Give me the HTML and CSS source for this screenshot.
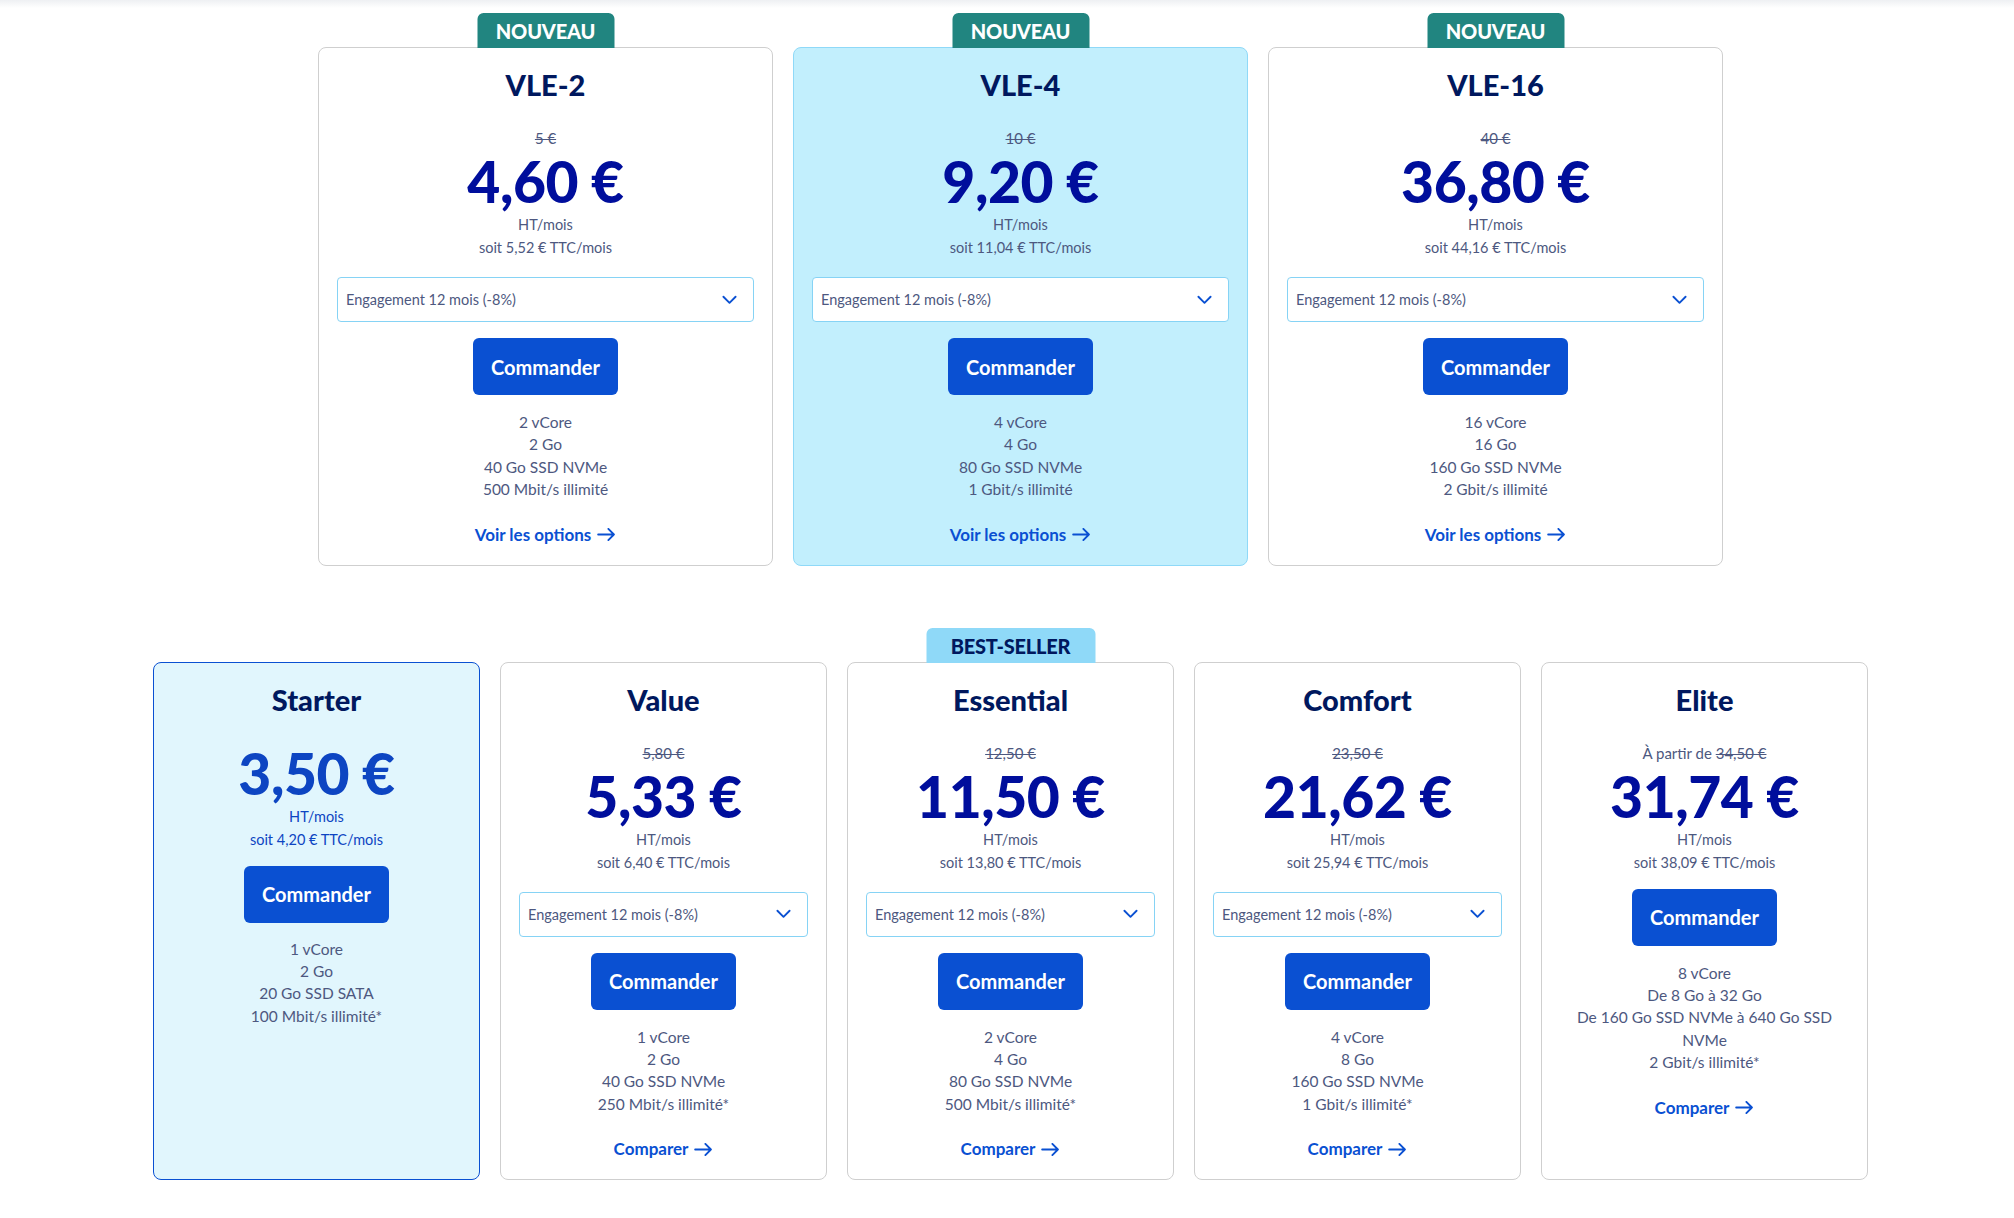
FILE: index.html
```html
<!DOCTYPE html>
<html lang="fr">
<head>
<meta charset="utf-8">
<title>VPS</title>
<link rel="stylesheet" href="styles.css">
</head>
<body>
<main class="page">
  <section class="row row-top">
    <div class="card">
      <div class="badge badge-new">NOUVEAU</div>
      <h2 class="name">VLE-2</h2>
      <div class="old"><s>5 €</s></div>
      <div class="price">4,60 €</div>
      <div class="sub first">HT/mois</div>
      <div class="sub">soit 5,52 € TTC/mois</div>
      <div class="select"><span>Engagement 12 mois (-8%)</span><svg class="chev" viewBox="0 0 16 10"><path d="M1.5 1.5 L8 8 L14.5 1.5"/></svg></div>
      <a class="btn">Commander</a>
      <ul class="specs"><li>2 vCore</li><li>2 Go</li><li>40 Go SSD NVMe</li><li>500 Mbit/s illimité</li></ul>
      <a class="more">Voir les options <svg class="arrow" viewBox="0 0 20 14"><path d="M1 7 H18 M12 1 L18 7 L12 13"/></svg></a>
    </div>
    <div class="card card-hl">
      <div class="badge badge-new">NOUVEAU</div>
      <h2 class="name">VLE-4</h2>
      <div class="old"><s>10 €</s></div>
      <div class="price">9,20 €</div>
      <div class="sub first">HT/mois</div>
      <div class="sub">soit 11,04 € TTC/mois</div>
      <div class="select"><span>Engagement 12 mois (-8%)</span><svg class="chev" viewBox="0 0 16 10"><path d="M1.5 1.5 L8 8 L14.5 1.5"/></svg></div>
      <a class="btn">Commander</a>
      <ul class="specs"><li>4 vCore</li><li>4 Go</li><li>80 Go SSD NVMe</li><li>1 Gbit/s illimité</li></ul>
      <a class="more">Voir les options <svg class="arrow" viewBox="0 0 20 14"><path d="M1 7 H18 M12 1 L18 7 L12 13"/></svg></a>
    </div>
    <div class="card">
      <div class="badge badge-new">NOUVEAU</div>
      <h2 class="name">VLE-16</h2>
      <div class="old"><s>40 €</s></div>
      <div class="price">36,80 €</div>
      <div class="sub first">HT/mois</div>
      <div class="sub">soit 44,16 € TTC/mois</div>
      <div class="select"><span>Engagement 12 mois (-8%)</span><svg class="chev" viewBox="0 0 16 10"><path d="M1.5 1.5 L8 8 L14.5 1.5"/></svg></div>
      <a class="btn">Commander</a>
      <ul class="specs"><li>16 vCore</li><li>16 Go</li><li>160 Go SSD NVMe</li><li>2 Gbit/s illimité</li></ul>
      <a class="more">Voir les options <svg class="arrow" viewBox="0 0 20 14"><path d="M1 7 H18 M12 1 L18 7 L12 13"/></svg></a>
    </div>
  </section>

  <section class="row row-bottom">
    <div class="card card-starter">
      <h2 class="name">Starter</h2>
      <div class="price price-noold">3,50 €</div>
      <div class="sub first">HT/mois</div>
      <div class="sub">soit 4,20 € TTC/mois</div>
      <a class="btn btn-direct">Commander</a>
      <ul class="specs specs-tight"><li>1 vCore</li><li>2 Go</li><li>20 Go SSD SATA</li><li>100 Mbit/s illimité*</li></ul>
    </div>
    <div class="card">
      <h2 class="name">Value</h2>
      <div class="old"><s>5,80 €</s></div>
      <div class="price">5,33 €</div>
      <div class="sub first">HT/mois</div>
      <div class="sub">soit 6,40 € TTC/mois</div>
      <div class="select"><span>Engagement 12 mois (-8%)</span><svg class="chev" viewBox="0 0 16 10"><path d="M1.5 1.5 L8 8 L14.5 1.5"/></svg></div>
      <a class="btn">Commander</a>
      <ul class="specs"><li>1 vCore</li><li>2 Go</li><li>40 Go SSD NVMe</li><li>250 Mbit/s illimité*</li></ul>
      <a class="more">Comparer <svg class="arrow" viewBox="0 0 20 14"><path d="M1 7 H18 M12 1 L18 7 L12 13"/></svg></a>
    </div>
    <div class="card">
      <div class="badge badge-best">BEST-SELLER</div>
      <h2 class="name">Essential</h2>
      <div class="old"><s>12,50 €</s></div>
      <div class="price">11,50 €</div>
      <div class="sub first">HT/mois</div>
      <div class="sub">soit 13,80 € TTC/mois</div>
      <div class="select"><span>Engagement 12 mois (-8%)</span><svg class="chev" viewBox="0 0 16 10"><path d="M1.5 1.5 L8 8 L14.5 1.5"/></svg></div>
      <a class="btn">Commander</a>
      <ul class="specs"><li>2 vCore</li><li>4 Go</li><li>80 Go SSD NVMe</li><li>500 Mbit/s illimité*</li></ul>
      <a class="more">Comparer <svg class="arrow" viewBox="0 0 20 14"><path d="M1 7 H18 M12 1 L18 7 L12 13"/></svg></a>
    </div>
    <div class="card">
      <h2 class="name">Comfort</h2>
      <div class="old"><s>23,50 €</s></div>
      <div class="price">21,62 €</div>
      <div class="sub first">HT/mois</div>
      <div class="sub">soit 25,94 € TTC/mois</div>
      <div class="select"><span>Engagement 12 mois (-8%)</span><svg class="chev" viewBox="0 0 16 10"><path d="M1.5 1.5 L8 8 L14.5 1.5"/></svg></div>
      <a class="btn">Commander</a>
      <ul class="specs"><li>4 vCore</li><li>8 Go</li><li>160 Go SSD NVMe</li><li>1 Gbit/s illimité*</li></ul>
      <a class="more">Comparer <svg class="arrow" viewBox="0 0 20 14"><path d="M1 7 H18 M12 1 L18 7 L12 13"/></svg></a>
    </div>
    <div class="card">
      <h2 class="name">Elite</h2>
      <div class="old">À partir de <s>34,50 €</s></div>
      <div class="price">31,74 €</div>
      <div class="sub first">HT/mois</div>
      <div class="sub">soit 38,09 € TTC/mois</div>
      <a class="btn btn-direct">Commander</a>
      <ul class="specs"><li>8 vCore</li><li>De 8 Go à 32 Go</li><li>De 160 Go SSD NVMe à 640 Go SSD NVMe</li><li>2 Gbit/s illimité*</li></ul>
      <a class="more">Comparer <svg class="arrow" viewBox="0 0 20 14"><path d="M1 7 H18 M12 1 L18 7 L12 13"/></svg></a>
    </div>
  </section>
</main>
</body>
</html>
```

FILE: styles.css
```css
* { box-sizing: border-box; }

html, body {
  margin: 0;
  padding: 0;
  background: #ffffff;
}

body {
  font-family: "Lato", "Liberation Sans", sans-serif;
  color: #4d5880;
  background: linear-gradient(#eef0f3 0, #ffffff 8px) no-repeat;
  min-height: 1218px;
}

.page {
  padding-top: 47px;
}

.row {
  display: grid;
  align-items: stretch;
}

.row-top {
  width: 1405px;
  margin-left: 318px;
  grid-template-columns: repeat(3, 455px);
  column-gap: 20px;
}

.row-bottom {
  width: 1715px;
  margin-left: 153px;
  margin-top: 96px;
  grid-template-columns: repeat(5, 1fr);
  column-gap: 20px;
}

.card {
  position: relative;
  display: flex;
  flex-direction: column;
  align-items: center;
  text-align: center;
  background: #ffffff;
  border: 1px solid #cfcfcf;
  border-radius: 8px;
  padding: 19px 18px 18px;
}

.card-hl {
  background: #c2effd;
  border-color: #8fd9f8;
}

.card-starter {
  background: #e1f6fd;
  border-color: #0a50d2;
}

.badge {
  position: absolute;
  top: -35px;
  left: 50%;
  transform: translateX(-50%);
  height: 35px;
  border-radius: 6px 6px 0 0;
  font-weight: 900;
  font-size: 20px;
  line-height: 36px;
  text-transform: uppercase;
  letter-spacing: -0.2px;
}

.badge-new {
  width: 137px;
  background: #218580;
  color: #ffffff;
}

.badge-best {
  width: 169px;
  background: #8fd9f8;
  color: #00185e;
}

.name {
  margin: 0;
  font-size: 29px;
  line-height: 36px;
  font-weight: 900;
  color: #00185e;
}

.old {
  margin-top: 24px;
  font-size: 15px;
  line-height: 22px;
  color: #4d5880;
}

.old s {
  text-decoration-thickness: 1px;
}

.price {
  margin-top: 4px;
  font-size: 57px;
  line-height: 56px;
  font-weight: 900;
  color: #000e9c;
  letter-spacing: -0.5px;
}

.price-noold {
  margin-top: 27px;
}

.card-starter .price,
.card-starter .sub {
  color: #0d45c2;
}

.sub {
  font-size: 14.5px;
  line-height: 23px;
  color: #4d5880;
}

.sub.first {
  margin-top: 4px;
}

.select {
  align-self: stretch;
  margin-top: 18px;
  height: 45px;
  display: flex;
  align-items: center;
  justify-content: space-between;
  padding: 0 16px 0 8px;
  background: #ffffff;
  border: 1px solid #86d3f5;
  border-radius: 4px;
  font-size: 14.5px;
  color: #4d5880;
}

.chev {
  width: 15px;
  height: 10px;
  fill: none;
  stroke: #0a50d2;
  stroke-width: 2;
  stroke-linecap: round;
  stroke-linejoin: round;
}

.btn {
  margin-top: 16px;
  height: 57px;
  padding: 0 18px;
  min-width: 144px;
  display: inline-flex;
  align-items: center;
  justify-content: center;
  background: #0a50d2;
  color: #ffffff;
  border-radius: 6px;
  font-size: 20px;
  font-weight: 700;
}

.btn-direct {
  margin-top: 15px;
}

.specs {
  list-style: none;
  margin: 16px 0 0;
  padding: 0;
  font-size: 15.5px;
  line-height: 22.4px;
  color: #4d5880;
}

.specs-tight {
  margin-top: 15px;
}

.more {
  margin-top: 22px;
  display: inline-flex;
  align-items: center;
  gap: 6px;
  font-size: 17px;
  line-height: 24px;
  font-weight: 700;
  color: #0a50d2;
}

.arrow {
  width: 19px;
  height: 13px;
  fill: none;
  stroke: #0a50d2;
  stroke-width: 2;
  stroke-linecap: round;
  stroke-linejoin: round;
}
```
